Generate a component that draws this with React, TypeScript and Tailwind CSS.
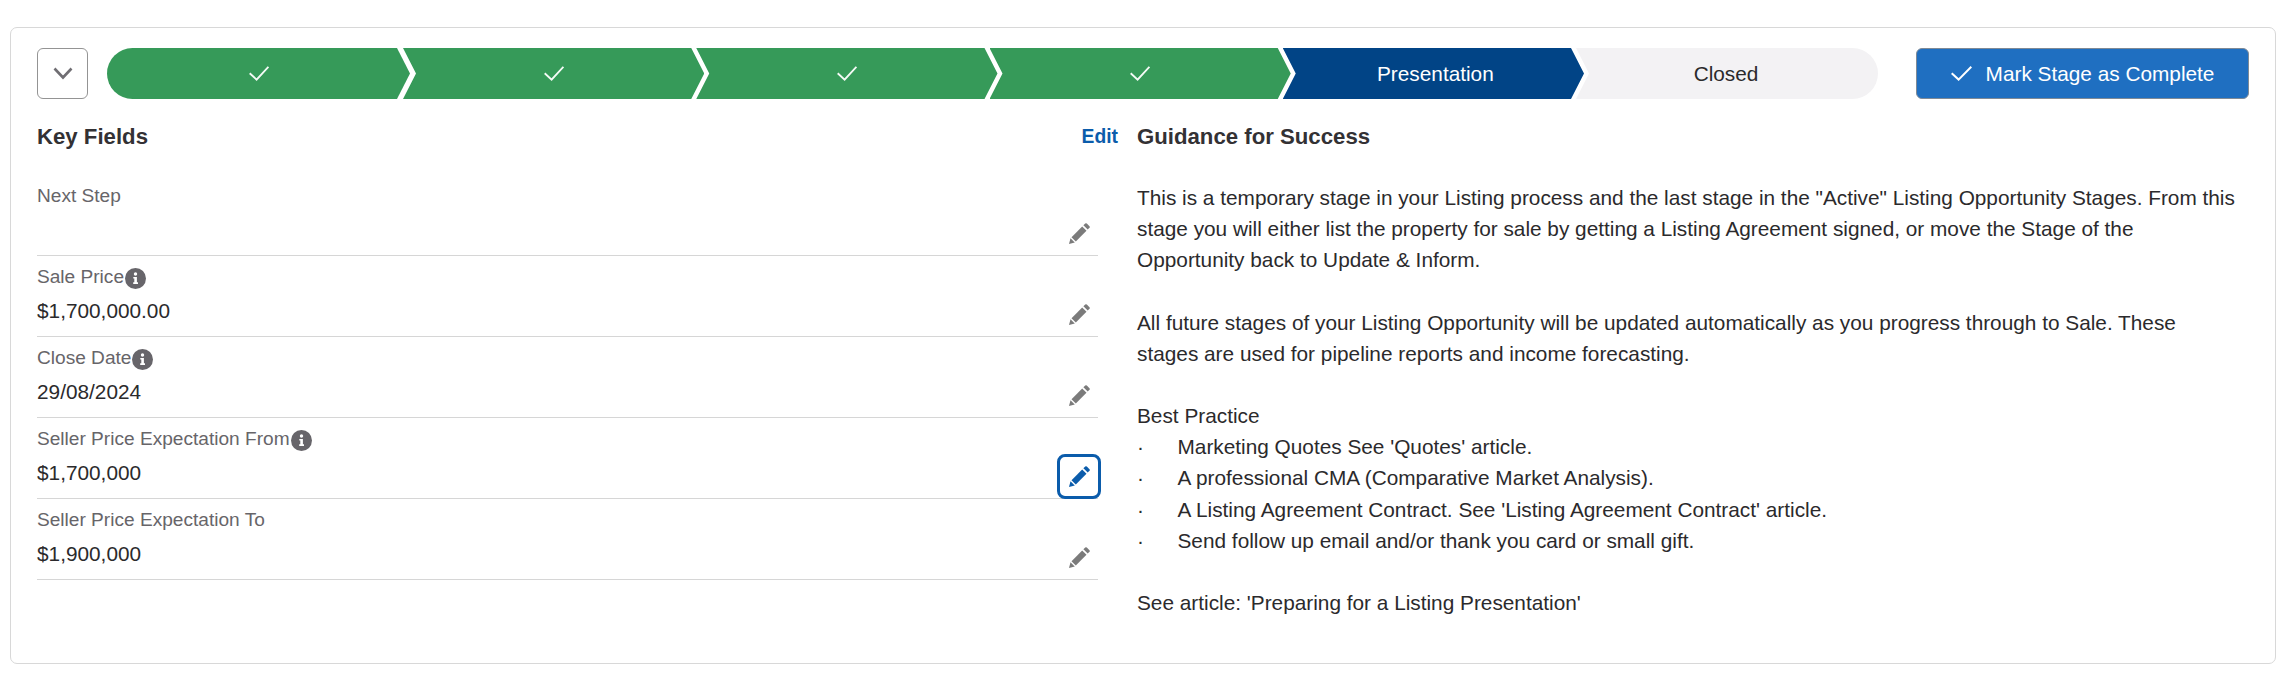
import React from "react";

const Check = () => (
  <svg width="20" height="15" viewBox="0 0 20 15" fill="none" stroke="#f4faf6" strokeWidth="1.9">
    <polyline points="0.7,7.2 7.6,13.6 19.4,0.8" />
  </svg>
);

const Pencil = ({ color }: { color: string }) => (
  <svg width="21" height="21" viewBox="0 0 21 21" fill={color}>
    <path d="M0 21 L1.5 15.2 L5.8 19.5 Z" />
    <path d="M2.5 14.2 L13.2 3.5 L17.5 7.8 L6.8 18.5 Z" />
    <path d="M14.4 2.3 L16.2 0.5 Q17 -0.2 17.8 0.5 L20.5 3.2 Q21.2 4 20.5 4.8 L18.7 6.6 Z" />
  </svg>
);

const Info = () => (
  <svg width="21" height="21" viewBox="0 0 21 21" className="shrink-0">
    <circle cx="10.5" cy="10.5" r="10.5" fill="#67656a" />
    <circle cx="10.5" cy="6" r="1.7" fill="#fff" />
    <path d="M8.3 9 H11.9 V14.3 H13 V16 H8.2 V14.3 H9.3 V10.6 H8.3 Z" fill="#fff" />
  </svg>
);

function Row({ label, value, info, focus }: { label: string; value?: string; info?: boolean; focus?: boolean }) {
  return (
    <div className="flex h-[81px] items-end justify-between border-b border-[#d6d6d6]">
      <div className="h-full pt-[8px]">
        <div className="flex h-[26px] items-center text-[19.1px] leading-[26px] text-[#676569]">
          <span>{label}</span>
          {info && <span className="ml-[1px] mt-[2px] flex"><Info /></span>}
        </div>
        <div className="mt-[6px] h-[30px] text-[20.8px] leading-[30px] text-[#2b2a2c]">{value}</div>
      </div>
      {focus ? (
        <button className="relative z-10 -mr-[3px] mb-[-1px] flex h-[45px] w-[44px] items-center justify-center rounded-[8px] border-[3px] border-[#0b5cab] bg-white">
          <Pencil color="#0b5cab" />
        </button>
      ) : (
        <button className="-mr-[3px] flex h-[44px] w-[44px] items-center justify-center">
          <Pencil color="#7b7b7b" />
        </button>
      )}
    </div>
  );
}

const Bullet = ({ children }: { children: React.ReactNode }) => (
  <div className="flex">
    <span className="w-[40.5px] shrink-0">·</span>
    <span>{children}</span>
  </div>
);

export default function App() {
  const mid =
    "flex h-[51px] items-center justify-center [clip-path:polygon(0_0,calc(100%-13px)_0,100%_50%,calc(100%-13px)_100%,0_100%,13px_50%)]";
  return (
    <div className="min-h-[686px] bg-white pt-[27px] font-['Liberation_Sans',Arial,sans-serif]">
      <div className="mx-[10px] h-[637px] rounded-[7px] border border-[#d8d8d8] bg-white px-[26px] pt-[20px]">
        <div className="flex h-[51px] items-stretch">
          <button className="flex h-[51px] w-[51px] shrink-0 items-center justify-center rounded-[6px] border border-[#949494] bg-white">
            <svg width="20" height="13" viewBox="0 0 20 13" fill="none" stroke="#706e73" strokeWidth="2.6">
              <polyline points="1.5,1.5 10,10.5 18.5,1.5" />
            </svg>
          </button>
          <div className="ml-[19px] flex w-[1771px] shrink-0">
            <div className="flex h-[51px] w-[303px] shrink-0 items-center justify-center rounded-l-[26px] bg-[#369a59] [clip-path:polygon(0_0,calc(100%-13px)_0,100%_50%,calc(100%-13px)_100%,0_100%)]">
              <Check />
            </div>
            <div className={`${mid} -ml-[7px] w-[301.25px] shrink-0 bg-[#369a59]`}><Check /></div>
            <div className={`${mid} -ml-[8px] w-[301.25px] shrink-0 bg-[#369a59]`}><Check /></div>
            <div className={`${mid} -ml-[8px] w-[301.25px] shrink-0 bg-[#369a59]`}><Check /></div>
            <div className={`${mid} -ml-[8px] w-[301.25px] shrink-0 bg-[#014486] pl-[4px] text-[20.8px] text-white`}>Presentation</div>
            <div className="-ml-[8px] flex h-[51px] w-[302px] shrink-0 items-center justify-center rounded-r-[26px] bg-[#f3f2f4] pr-[2px] text-[20.8px] text-[#2b2a2c] [clip-path:polygon(0_0,100%_0,100%_100%,0_100%,13px_50%)]">
              Closed
            </div>
          </div>
          <button className="ml-[38px] flex h-[51px] w-[333px] shrink-0 items-center justify-center gap-[14px] rounded-[6px] border border-[#7f8a96] bg-[#1f6fc1] text-[20.8px] text-white">
            <svg width="21" height="15" viewBox="0 0 21 15" fill="none" stroke="#fff" strokeWidth="2">
              <polyline points="0.7,7.2 7.6,13.6 20.3,0.8" />
            </svg>
            Mark Stage as Complete
          </button>
        </div>

        <div className="mt-[23px] flex">
          <section className="w-[1081px] shrink-0">
            <div className="flex h-[30px] items-center justify-between">
              <h2 className="text-[22.2px] font-bold leading-[30px] text-[#333134]">Key Fields</h2>
              <a className="text-[19.3px] font-bold leading-[30px] text-[#0b5cab]">Edit</a>
            </div>
            <div className="mt-[23px] w-[1061px]">
              <Row label="Next Step" />
              <Row label="Sale Price" value="$1,700,000.00" info />
              <Row label="Close Date" value="29/08/2024" info />
              <Row label="Seller Price Expectation From" value="$1,700,000" info focus />
              <Row label="Seller Price Expectation To" value="$1,900,000" />
            </div>
          </section>
          <section className="ml-[19px] flex-1">
            <h2 className="text-[22.2px] font-bold leading-[30px] text-[#333134]">Guidance for Success</h2>
            <div className="mt-[30px] whitespace-nowrap text-[20.8px] leading-[31.15px] text-[#2b2a2c]">
              <p>
                This is a temporary stage in your Listing process and the last stage in the "Active" Listing Opportunity Stages. From this
                <br />
                stage you will either list the property for sale by getting a Listing Agreement signed, or move the Stage of the
                <br />
                Opportunity back to Update &amp; Inform.
              </p>
              <p className="mt-[31.15px]">
                All future stages of your Listing Opportunity will be updated automatically as you progress through to Sale. These
                <br />
                stages are used for pipeline reports and income forecasting.
              </p>
              <p className="mt-[31.15px]">Best Practice</p>
              <Bullet>Marketing Quotes See 'Quotes' article.</Bullet>
              <Bullet>A professional CMA (Comparative Market Analysis).</Bullet>
              <Bullet>A Listing Agreement Contract. See 'Listing Agreement Contract' article.</Bullet>
              <Bullet>Send follow up email and/or thank you card or small gift.</Bullet>
              <p className="mt-[31.15px]">See article: 'Preparing for a Listing Presentation'</p>
            </div>
          </section>
        </div>
      </div>
    </div>
  );
}
